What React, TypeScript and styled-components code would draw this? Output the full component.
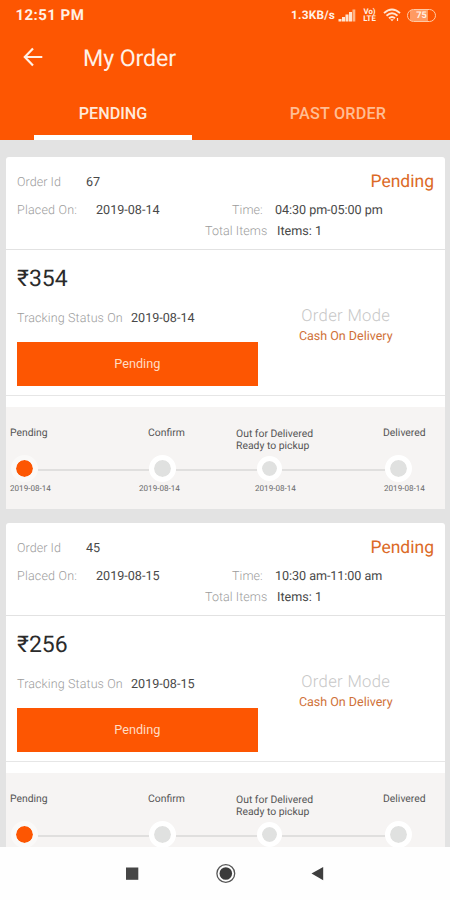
import React from 'react';
import styled, { createGlobalStyle } from 'styled-components';

const ORANGE = '#fd5602';

const GlobalStyle = createGlobalStyle`
  * { box-sizing: border-box; }
  html, body { margin: 0; padding: 0; }
  body {
    font-family: Roboto, "Noto Sans", sans-serif;
    background: #fff;
    text-rendering: geometricPrecision;
  }
`;

const Screen = styled.div`
  width: 450px;
  height: 900px;
  overflow: hidden;
  display: flex;
  flex-direction: column;
  background: #e3e3e3;
`;

const Header = styled.header`
  height: 140px;
  flex: none;
  display: flex;
  flex-direction: column;
  background: ${ORANGE};
  color: #fff1e6;
`;

const StatusBar = styled.div`
  height: 30px;
  display: flex;
  align-items: center;
  padding: 0 14px 0 15.5px;
`;

const Clock = styled.span`
  font-size: 15px;
  font-weight: 700;
  letter-spacing: 0.45px;
  flex: 1;
`;

const Speed = styled.span`
  font-size: 11.8px;
  font-weight: 700;
  letter-spacing: 0.25px;
  width: 47px;
  white-space: nowrap;
`;

const Volte = styled.span`
  width: 15px;
  margin: 0 6px 0 6px;
  font-size: 7.8px;
  line-height: 7px;
  font-weight: 700;
  text-align: center;
`;

const Battery = styled.span`
  width: 29px;
  height: 13px;
  margin-left: 6px;
  border: 1.5px solid #ffc9a4;
  border-radius: 7px;
  display: flex;
  align-items: center;
  justify-content: center;
  font-size: 9.2px;
  font-weight: 700;
  background: linear-gradient(90deg, transparent 2px, #ff9a62 2px, #ff9a62 20px, transparent 20px);
`;

const TitleBar = styled.div`
  height: 54px;
  display: flex;
  align-items: center;
  padding-left: 23px;
`;

const Title = styled.h1`
  margin: 0 0 0 40px;
  padding-top: 2px;
  font-size: 23.2px;
  font-weight: 400;
  letter-spacing: -0.1px;
`;

const Tabs = styled.div`
  flex: 1;
  display: grid;
  grid-template-columns: 1fr 1fr;
`;

const Tab = styled.button<{ $active?: boolean }>`
  border: 0;
  background: none;
  font: 500 16.2px/18px Roboto, sans-serif;
  color: ${(p) => (p.$active ? '#ffeadb' : '#ffbd94')};
  padding: 21px 0 0;
  margin: ${(p) => (p.$active ? '0 34px' : '0 35px 0 33px')};
  display: flex;
  flex-direction: column;
  align-items: center;
  white-space: nowrap;
  &::after {
    content: '';
    width: 158px;
    height: 5px;
    margin-top: 12px;
    background: ${(p) => (p.$active ? '#fff' : 'transparent')};
  }
`;

const TabText = styled.span<{ $spacing?: number }>`
  letter-spacing: ${(p) => p.$spacing ?? 0}px;
`;

const List = styled.main`
  flex: 1;
  min-height: 0;
  overflow: hidden;
  padding: 17px 5px 0 6px;
  display: flex;
  flex-direction: column;
  gap: 14.5px;
`;

const Card = styled.article`
  height: 351.5px;
  flex: none;
  background: #fff;
  border-radius: 3px 3px 0 0;
`;

const Summary = styled.section`
  height: 93px;
  border-bottom: 1.5px solid #e2e2e2;
  padding: 13px 11px 0 11px;
`;

const Row = styled.div<{ $h: number; $indent?: number }>`
  height: ${(p) => p.$h}px;
  padding-left: ${(p) => p.$indent ?? 0}px;
  display: flex;
  align-items: center;
`;

const Label = styled.span<{ $w: number; $spacing?: number }>`
  width: ${(p) => p.$w}px;
  flex: none;
  font-size: 12.5px;
  font-weight: 300;
  letter-spacing: ${(p) => p.$spacing ?? 0.06}px;
  color: #9c9c9c;
  white-space: nowrap;
`;

const Value = styled.span<{ $w?: number; $spacing?: number }>`
  width: ${(p) => (p.$w ? `${p.$w}px` : 'auto')};
  flex: none;
  font-size: 12.6px;
  letter-spacing: ${(p) => p.$spacing ?? 0}px;
  color: #484848;
  white-space: nowrap;
`;

const State = styled.span`
  margin-left: auto;
  font-size: 17.5px;
  line-height: 20px;
  color: #dc6a27;
`;

const Payment = styled.section`
  height: 146px;
  border-bottom: 1.5px solid #e6e6e6;
  padding: 0 11px;
  display: flex;
`;

const PaymentMain = styled.div`
  width: 240.5px;
  flex: none;
`;

const Price = styled.div`
  padding-top: 13px;
  height: 57px;
  font-size: 23px;
  line-height: 31px;
  color: #2b2b2b;
`;

const StatusButton = styled.button`
  display: block;
  width: 240.5px;
  height: 43.5px;
  margin-top: 12px;
  border: 0;
  padding: 0;
  background: ${ORANGE};
  color: #ffdcc4;
  font: 400 12.7px Roboto, sans-serif;
`;

const Mode = styled.div`
  flex: 1;
  padding: 56.5px 0 0;
  display: flex;
  flex-direction: column;
  align-items: center;
`;

const ModeTitle = styled.span`
  font-size: 16.6px;
  line-height: 20px;
  font-weight: 300;
  letter-spacing: 0.35px;
  color: #c8c8c8;
`;

const ModeValue = styled.span`
  font-size: 12.5px;
  line-height: 20px;
  color: #cf7138;
`;

const Tracker = styled.section`
  height: 102px;
  margin-top: 10.5px;
  background: #f6f4f3;
  overflow: hidden;
`;

const StepLabels = styled.div`
  height: 48px;
  padding: 20.5px 0 0 4px;
  display: grid;
  grid-template-columns: 138px 88px 147px auto;
`;

const StepLabel = styled.span<{ $drop?: boolean }>`
  font-size: 10.4px;
  line-height: 12.4px;
  padding-top: ${(p) => (p.$drop ? 1 : 0)}px;
  color: #555;
  white-space: pre;
`;

const Dots = styled.div`
  height: 27px;
  padding-left: 4.5px;
  display: flex;
  align-items: center;
`;

const Dot = styled.span<{ $active?: boolean; $small?: boolean }>`
  width: ${(p) => (p.$small ? 25 : 27)}px;
  height: ${(p) => (p.$small ? 25 : 27)}px;
  flex: none;
  border-radius: 50%;
  border: 5.5px solid ${(p) => (p.$active ? '#faf9f8' : '#fff')};
  background: ${(p) => (p.$active ? ORANGE : '#e0e1e0')};
  background-clip: padding-box;
`;

const Connector = styled.span<{ $w: number }>`
  width: ${(p) => p.$w}px;
  height: 2px;
  margin-top: 3px;
  background: #e0dfde;
`;

const StepDates = styled.div`
  height: 27px;
  padding: 1px 0 0 4px;
  display: grid;
  grid-template-columns: 129px 116px 129px auto;
`;

const StepDate = styled.span`
  font-size: 8.1px;
  line-height: 10px;
  color: #6a6a6a;
  white-space: nowrap;
`;

const NavBar = styled.nav`
  height: 53px;
  flex: none;
  background: #fefefe;
  display: flex;
  align-items: flex-start;
  padding: 16px 0 0 125px;
`;

interface Order {
  id: string;
  date: string;
  time: string;
  price: string;
  stepDates: string[];
}

const orders: Order[] = [
  {
    id: '67',
    date: '2019-08-14',
    time: '04:30 pm-05:00 pm',
    price: '₹354',
    stepDates: ['2019-08-14', '2019-08-14', '2019-08-14', '2019-08-14'],
  },
  { id: '45', date: '2019-08-15', time: '10:30 am-11:00 am', price: '₹256', stepDates: [] },
];

const BackIcon = () => (
  <svg width="20" height="20" viewBox="0 0 20 20" fill="none" stroke="#fff1e6" strokeWidth="2.2">
    <path d="M19.3 10H2M10 1.5L1.8 10L10 18.5" />
  </svg>
);

const SignalIcon = () => (
  <svg width="18" height="13" viewBox="0 0 18 13" fill="#ffe3cf">
    <rect x="0.5" y="10" width="3" height="2.5" />
    <rect x="4" y="8" width="3" height="4.5" />
    <rect x="7.5" y="5.5" width="3" height="7" />
    <rect x="11" y="3" width="3" height="9.5" />
    <rect x="14.5" y="0.5" width="2.8" height="12" fill="#ffb486" />
  </svg>
);

const WifiIcon = () => (
  <svg width="18" height="14" viewBox="0 0 18 14" fill="none" stroke="#ffe6d4" strokeWidth="1.9">
    <path d="M1 5.1Q9-2 17 5.1M3.5 7.8Q9 2.8 14.5 7.8M6 10.3Q9 7.6 12 10.3" />
    <path d="M7.2 11.2h3.6L9 13.2z" fill="#ffe6d4" stroke="none" />
    <path d="M14.5 10v3" strokeWidth="1.2" />
  </svg>
);

const NavIcons = () => (
  <svg width="200" height="22" viewBox="0 0 200 22">
    <rect x="1" y="4.5" width="12.3" height="12.3" fill="#464646" />
    <circle cx="100.8" cy="10.5" r="8.9" fill="none" stroke="#555" strokeWidth="1.3" />
    <circle cx="100.8" cy="10.5" r="6.3" fill="#3b3b3b" />
    <path d="M186.5 10.5L198.2 4v13.2z" fill="#3e3e3e" />
  </svg>
);

const OrderCard = ({ order }: { order: Order }) => (
  <Card>
    <Summary>
      <Row $h={24}>
        <Label $w={69}>Order Id</Label>
        <Value>{order.id}</Value>
        <State>Pending</State>
      </Row>
      <Row $h={32}>
        <Label $w={79} $spacing={0.2}>Placed On:</Label>
        <Value $w={136}>{order.date}</Value>
        <Label $w={43}>Time:</Label>
        <Value $spacing={-0.06}>{order.time}</Value>
      </Row>
      <Row $h={10} $indent={188}>
        <Label $w={72}>Total Items</Label>
        <Value>Items: 1</Value>
      </Row>
    </Summary>
    <Payment>
      <PaymentMain>
        <Price>{order.price}</Price>
        <Row $h={23}>
          <Label $w={114} $spacing={0.12}>Tracking Status On</Label>
          <Value>{order.date}</Value>
        </Row>
        <StatusButton>Pending</StatusButton>
      </PaymentMain>
      <Mode>
        <ModeTitle>Order Mode</ModeTitle>
        <ModeValue>Cash On Delivery</ModeValue>
      </Mode>
    </Payment>
    <Tracker>
      <StepLabels>
        <StepLabel>Pending</StepLabel>
        <StepLabel>Confirm</StepLabel>
        <StepLabel $drop>{'Out for Delivered\nReady to pickup'}</StepLabel>
        <StepLabel>Delivered</StepLabel>
      </StepLabels>
      <Dots>
        <Dot $active />
        <Connector $w={111} />
        <Dot />
        <Connector $w={81} />
        <Dot $small />
        <Connector $w={103} />
        <Dot />
      </Dots>
      <StepDates>
        {order.stepDates.map((date, i) => (
          <StepDate key={i}>{date}</StepDate>
        ))}
      </StepDates>
    </Tracker>
  </Card>
);

export default function App() {
  return (
    <>
      <GlobalStyle />
      <Screen>
        <Header>
          <StatusBar>
            <Clock>12:51 PM</Clock>
            <Speed>1.3KB/s</Speed>
            <SignalIcon />
            <Volte>Vo) LTE</Volte>
            <WifiIcon />
            <Battery>75</Battery>
          </StatusBar>
          <TitleBar>
            <BackIcon />
            <Title>My Order</Title>
          </TitleBar>
          <Tabs>
            <Tab $active>
              <TabText>PENDING</TabText>
            </Tab>
            <Tab>
              <TabText $spacing={0.2}>PAST ORDER</TabText>
            </Tab>
          </Tabs>
        </Header>
        <List>
          {orders.map((o) => (
            <OrderCard key={o.id} order={o} />
          ))}
        </List>
        <NavBar>
          <NavIcons />
        </NavBar>
      </Screen>
    </>
  );
}
